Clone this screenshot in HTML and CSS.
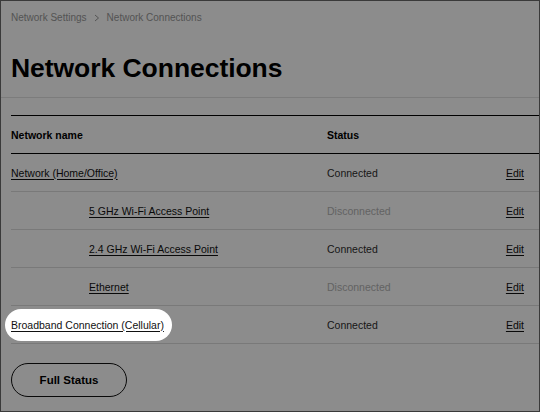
FILE: index.html
```html
<!DOCTYPE html>
<html lang="en">
<head>
<meta charset="utf-8">
<title>Network Connections</title>
<link rel="stylesheet" href="styles.css">
</head>
<body>
<div class="page">
  <nav class="crumbs">
    <span>Network Settings</span>
    <svg class="chev" width="6" height="8" viewBox="0 0 6 8"><polyline points="1,1 4.5,4 1,7" fill="none" stroke="#999" stroke-width="1"/></svg>
    <span>Network Connections</span>
  </nav>
  <h1 class="title">Network Connections</h1>
  <div class="rule"></div>
  <div class="table">
    <div class="row head">
      <div class="cell">Network name</div>
      <div class="cell">Status</div>
      <div class="cell"></div>
    </div>
    <div class="row">
      <div class="cell"><a class="link" href="#">Network (Home/Office)</a></div>
      <div class="cell on">Connected</div>
      <div class="cell"><a class="link" href="#">Edit</a></div>
    </div>
    <div class="row">
      <div class="cell sub"><a class="link" href="#">5 GHz Wi-Fi Access Point</a></div>
      <div class="cell off">Disconnected</div>
      <div class="cell"><a class="link" href="#">Edit</a></div>
    </div>
    <div class="row">
      <div class="cell sub"><a class="link" href="#">2.4 GHz Wi-Fi Access Point</a></div>
      <div class="cell on">Connected</div>
      <div class="cell"><a class="link" href="#">Edit</a></div>
    </div>
    <div class="row">
      <div class="cell sub"><a class="link" href="#">Ethernet</a></div>
      <div class="cell off">Disconnected</div>
      <div class="cell"><a class="link" href="#">Edit</a></div>
    </div>
    <div class="row">
      <div class="cell"><span class="spot"><a class="link" href="#">Broadband Connection (Cellular)</a></span></div>
      <div class="cell on">Connected</div>
      <div class="cell"><a class="link" href="#">Edit</a></div>
    </div>
  </div>
  <div class="actions">
    <button class="btn" type="button">Full Status</button>
  </div>
</div>
</body>
</html>
```

FILE: styles.css
```css
html, body {
  margin: 0;
  padding: 0;
}
body {
  width: 540px;
  height: 412px;
  box-sizing: border-box;
  border: 1px solid #3a3a3a;
  background: #ffffff;
  font-family: "Liberation Sans", Arial, sans-serif;
  color: #000;
  overflow: hidden;
}
.page {
  display: flex;
  flex-direction: column;
}
.crumbs {
  display: flex;
  align-items: center;
  gap: 7px;
  padding: 10px 0 0 10px;
  font-size: 10px;
  line-height: 14px;
  color: #999999;
}
.chev {
  display: block;
}
.title {
  margin: 27px 0 0 10px;
  font-size: 26.5px;
  line-height: 32px;
  font-weight: 700;
  letter-spacing: -0.05px;
}
.rule {
  margin-top: 13px;
  height: 1px;
  background: #e2e2e2;
}
.table {
  margin: 17px 0 0 10px;
  display: flex;
  flex-direction: column;
  font-size: 10.5px;
}
.row {
  display: grid;
  grid-template-columns: 316px 1fr auto;
  align-items: center;
  height: 37px;
  border-bottom: 1px solid #dcdcdc;
  padding-right: 15px;
}
.row.head {
  border-top: 1px solid #000;
  border-bottom: 1px solid #000;
  font-weight: 700;
}
.cell.sub {
  padding-left: 78px;
}
.on {
  color: #2e2e2e;
}
.off {
  color: #b4b4b4;
}
.link {
  color: #111;
  text-decoration: underline;
  text-decoration-thickness: 1px;
  text-underline-offset: 1.5px;
}
.spot {
  position: relative;
  z-index: 2;
}
.spot::before {
  content: "";
  position: absolute;
  z-index: -1;
  left: -6px;
  right: -8px;
  top: -10px;
  bottom: -10px;
  border-radius: 17px;
  background: #fff;
  box-shadow: 0 0 0 2000px rgba(0, 0, 0, 0.45);
}
.actions {
  padding: 19px 0 0 10px;
}
.btn {
  width: 116px;
  height: 34px;
  border: 1px solid #111;
  border-radius: 17px;
  background: #fff;
  font-family: "Liberation Sans", Arial, sans-serif;
  font-size: 11.5px;
  font-weight: 700;
  color: #000;
  padding: 0;
}
```
